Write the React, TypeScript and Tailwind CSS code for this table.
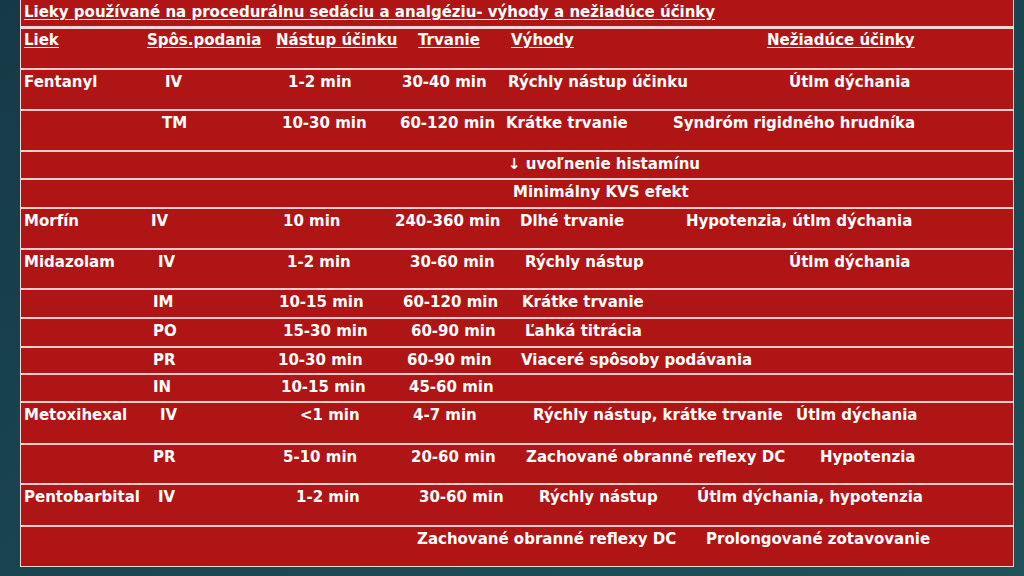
import React from "react";

type Cell = [string, string];

interface Row {
  h: string;
  cells: Cell[];
}

// spacing of each cell follows the slide, widths in px via full class names
const rows: Row[] = [
  {
    h: "h-[41px]",
    cells: [
      ["w-[141px]", "Fentanyl"],
      ["w-[123px]", "IV"],
      ["w-[114px]", "1-2 min"],
      ["w-[106px]", "30-40 min"],
      ["w-[281px]", "Rýchly nástup účinku"],
      ["", "Útlm dýchania"],
    ],
  },
  {
    h: "h-[41px]",
    cells: [
      ["w-[138px]", ""],
      ["w-[120px]", "TM"],
      ["w-[118px]", "10-30 min"],
      ["w-[106px]", "60-120 min"],
      ["w-[167px]", "Krátke trvanie"],
      ["", "Syndróm rigidného hrudníka"],
    ],
  },
  { h: "h-[28px]", cells: [["w-[484px]", ""], ["", "↓ uvoľnenie histamínu"]] },
  { h: "h-[29px]", cells: [["w-[489px]", ""], ["", "Minimálny KVS efekt"]] },
  {
    h: "h-[41px]",
    cells: [
      ["w-[127px]", "Morfín"],
      ["w-[132px]", "IV"],
      ["w-[112px]", "10 min"],
      ["w-[125px]", "240-360 min"],
      ["w-[166px]", "Dlhé trvanie"],
      ["", "Hypotenzia, útlm dýchania"],
    ],
  },
  {
    h: "h-[40px]",
    cells: [
      ["w-[134px]", "Midazolam"],
      ["w-[129px]", "IV"],
      ["w-[123px]", "1-2 min"],
      ["w-[115px]", "30-60 min"],
      ["w-[264px]", "Rýchly nástup"],
      ["", "Útlm dýchania"],
    ],
  },
  {
    h: "h-[29px]",
    cells: [
      ["w-[129px]", ""],
      ["w-[126px]", "IM"],
      ["w-[124px]", "10-15 min"],
      ["w-[119px]", "60-120 min"],
      ["", "Krátke trvanie"],
    ],
  },
  {
    h: "h-[29px]",
    cells: [
      ["w-[129px]", ""],
      ["w-[130px]", "PO"],
      ["w-[128px]", "15-30 min"],
      ["w-[114px]", "60-90 min"],
      ["", "Ľahká titrácia"],
    ],
  },
  {
    h: "h-[27px]",
    cells: [
      ["w-[129px]", ""],
      ["w-[125px]", "PR"],
      ["w-[129px]", "10-30 min"],
      ["w-[114px]", "60-90 min"],
      ["", "Viaceré spôsoby podávania"],
    ],
  },
  {
    h: "h-[28px]",
    cells: [
      ["w-[129px]", ""],
      ["w-[128px]", "IN"],
      ["w-[128px]", "10-15 min"],
      ["", "45-60 min"],
    ],
  },
  {
    h: "h-[42px]",
    cells: [
      ["w-[136px]", "Metoxihexal"],
      ["w-[140px]", "IV"],
      ["w-[113px]", "<1 min"],
      ["w-[120px]", "4-7 min"],
      ["w-[263px]", "Rýchly nástup, krátke trvanie"],
      ["", "Útlm dýchania"],
    ],
  },
  {
    h: "h-[40px]",
    cells: [
      ["w-[129px]", ""],
      ["w-[130px]", "PR"],
      ["w-[128px]", "5-10 min"],
      ["w-[115px]", "20-60 min"],
      ["w-[294px]", "Zachované obranné reflexy DC"],
      ["", "Hypotenzia"],
    ],
  },
  {
    h: "h-[42px]",
    cells: [
      ["w-[134px]", "Pentobarbital"],
      ["w-[138px]", "IV"],
      ["w-[123px]", "1-2 min"],
      ["w-[120px]", "30-60 min"],
      ["w-[158px]", "Rýchly nástup"],
      ["", "Útlm dýchania, hypotenzia"],
    ],
  },
  {
    h: "h-[41px]",
    cells: [
      ["w-[393px]", ""],
      ["w-[289px]", "Zachované obranné reflexy DC"],
      ["", "Prolongované zotavovanie"],
    ],
  },
];

const header: Cell[] = [
  ["w-[123px]", "Liek"],
  ["w-[129px]", "Spôs.podania"],
  ["w-[142px]", "Nástup účinku"],
  ["w-[93px]", "Trvanie"],
  ["w-[256px]", "Výhody"],
  ["", "Nežiadúce účinky"],
];

export default function App() {
  return (
    <div
      className="w-[1024px] h-[576px] bg-gradient-to-br from-[#163a45] via-[#184550] to-[#1f5259] pl-[20px] pr-[10px] pb-[9px] text-white font-bold text-[15px]"
      style={{ fontFamily: '"DejaVu Sans", "Liberation Sans", sans-serif' }}
    >
      <div className="h-full flex flex-col bg-[#b01516] border border-[#f3d6d6] border-t-0">
        <div className="h-[27px] pl-[3px] pt-[2px] leading-[20px] underline underline-offset-2">
          Lieky používané na procedurálnu sedáciu a analgéziu- výhody a nežiadúce účinky
        </div>
        <div className="h-[43px] border-t-[3px] border-[#f3d6d6] flex pl-[3px] pt-[1px] leading-[20px] underline underline-offset-2">
          {header.map(([w, t], i) => (
            <span key={i} className={"shrink-0 whitespace-nowrap " + w}>
              {t}
            </span>
          ))}
        </div>
        {rows.map((r, i) => (
          <div
            key={i}
            className={
              "flex shrink-0 pl-[3px] pt-[2px] leading-[20px] border-t-2 border-[#f0cccc] " +
              r.h
            }
          >
            {r.cells.map(([w, t], j) => (
              <span key={j} className={"shrink-0 whitespace-nowrap " + w}>
                {t}
              </span>
            ))}
          </div>
        ))}
      </div>
    </div>
  );
}
